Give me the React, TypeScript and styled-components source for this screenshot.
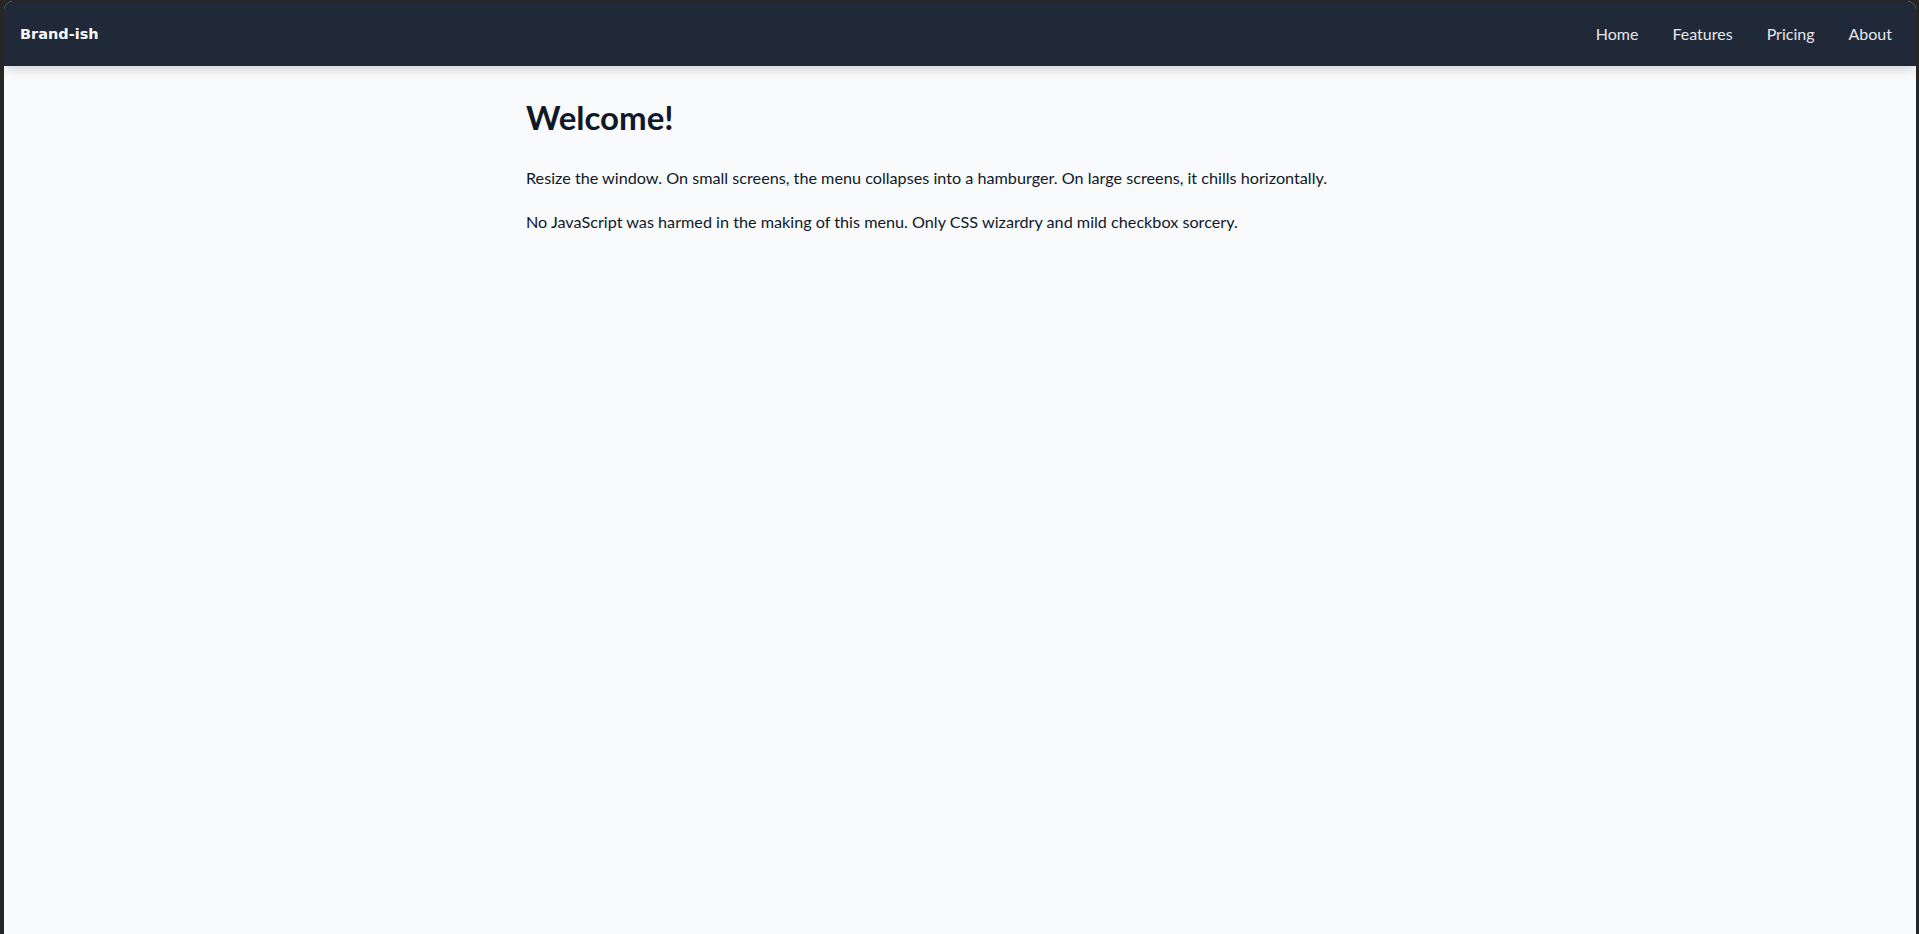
import React from "react";
import styled, { createGlobalStyle } from "styled-components";

const GlobalStyle = createGlobalStyle`
  html, body {
    margin: 0;
    padding: 0;
    height: 100%;
    background: #262626;
  }
  #root {
    height: 100%;
  }
  * {
    box-sizing: border-box;
  }
`;

// Window frame

const Frame = styled.div`
  height: 100%;
  padding: 1px 3px 0 4px;
  background: #262626;
`;

const Page = styled.div`
  height: 100%;
  display: flex;
  flex-direction: column;
  background: #f8fafc;
  border-radius: 9px 9px 0 0;
  overflow: hidden;
  font-family: "Lato", "Noto Sans", sans-serif;
  color: #111827;
`;

// Navbar

const NavBar = styled.nav`
  height: 65px;
  flex: none;
  display: flex;
  align-items: center;
  justify-content: space-between;
  padding: 0 24px 0 16px;
  background: #1f2937;
  box-shadow: 0 2px 12px rgba(0, 0, 0, 0.18);
  position: relative;
  z-index: 1;
`;

const Brand = styled.a`
  font-family: "DejaVu Sans", "Verdana", sans-serif;
  font-weight: 700;
  font-size: 14.5px;
  color: #f9fafb;
  text-decoration: none;
`;

const Menu = styled.ul`
  display: flex;
  gap: 34px;
  list-style: none;
  margin: 0;
  padding: 0;
`;

const MenuLink = styled.a`
  font-size: 16px;
  color: #e5e7eb;
  text-decoration: none;
`;

// Content

const Main = styled.main`
  width: 100%;
  max-width: 900px;
  margin: 0 auto;
  padding: 28px 16px;
`;

const Heading = styled.h1`
  font-size: 33px;
  font-weight: 700;
  margin: 0 0 24px;
  line-height: 1.4;
`;

const Text = styled.p`
  font-size: 16.2px;
  line-height: 28px;
  margin: 0 0 16px;
`;

const links = ["Home", "Features", "Pricing", "About"];

const App = () => {
  return (
    <>
      <GlobalStyle />
      <Frame>
        <Page>
          <NavBar>
            <Brand href="#">Brand-ish</Brand>
            <Menu>
              {links.map((l) => (
                <li key={l}>
                  <MenuLink href="#">{l}</MenuLink>
                </li>
              ))}
            </Menu>
          </NavBar>
          <Main>
            <Heading>Welcome!</Heading>
            <Text>
              Resize the window. On small screens, the menu collapses into a hamburger. On large screens, it chills horizontally.
            </Text>
            <Text>
              No JavaScript was harmed in the making of this menu. Only CSS wizardry and mild checkbox sorcery.
            </Text>
          </Main>
        </Page>
      </Frame>
    </>
  );
};

export default App;
